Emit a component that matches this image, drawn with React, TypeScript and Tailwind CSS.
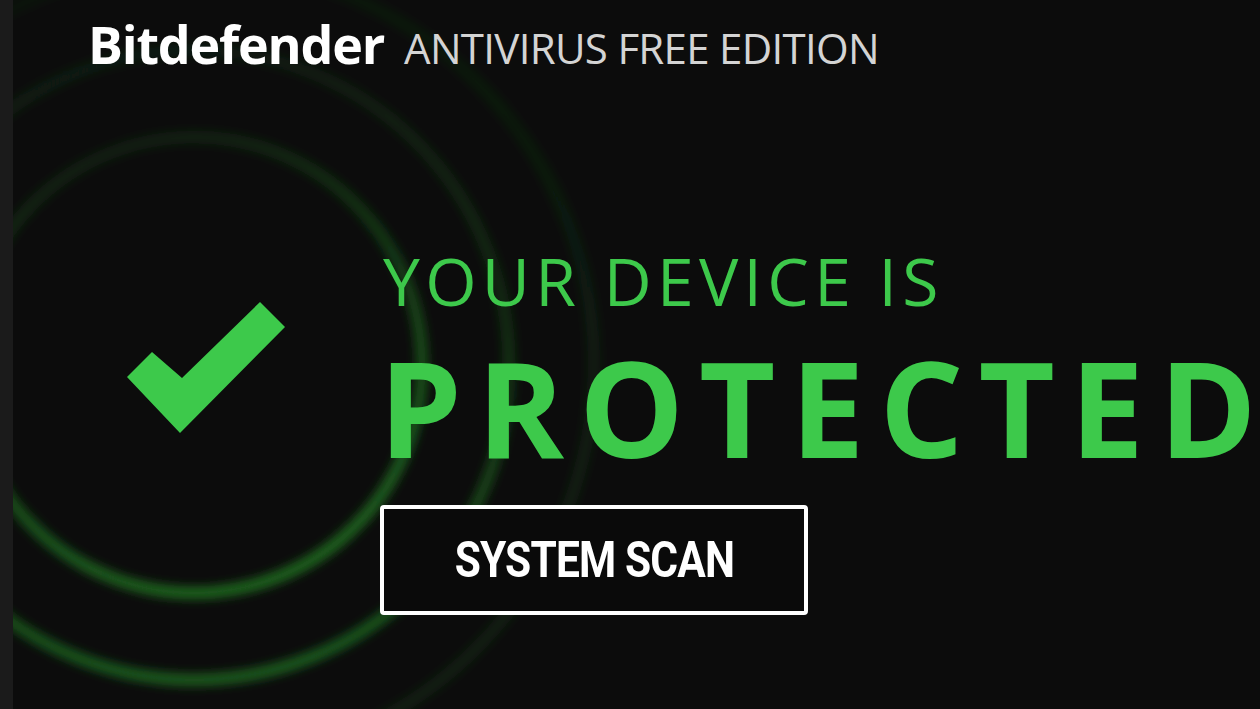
import React from "react";

function Rings() {
  return (
    <svg
      className="absolute left-0 top-0 pointer-events-none"
      width="1247"
      height="709"
      viewBox="0 0 1247 709"
    >
      <defs>
        <filter id="blur" x="-50%" y="-50%" width="200%" height="200%">
          <feGaussianBlur stdDeviation="5" />
        </filter>
        <linearGradient id="g1" x1="0.2" y1="0" x2="0.5" y2="1">
          <stop offset="0" stopColor="#1e6e20" stopOpacity="0.14" />
          <stop offset="0.45" stopColor="#1e6e20" stopOpacity="0.45" />
          <stop offset="1" stopColor="#1e6e20" stopOpacity="0.85" />
        </linearGradient>
        <linearGradient id="g2" x1="0.3" y1="0" x2="0.4" y2="1">
          <stop offset="0" stopColor="#1e6e20" stopOpacity="0.14" />
          <stop offset="0.5" stopColor="#1e6e20" stopOpacity="0.3" />
          <stop offset="1" stopColor="#1e6e20" stopOpacity="0.75" />
        </linearGradient>
        <linearGradient id="g3" x1="0" y1="0" x2="1" y2="1">
          <stop offset="0" stopColor="#1e6e20" stopOpacity="0.06" />
          <stop offset="1" stopColor="#1e6e20" stopOpacity="0.2" />
        </linearGradient>
      </defs>
      <g filter="url(#blur)" fill="none">
        <circle cx="181" cy="365" r="228" stroke="url(#g1)" strokeWidth="13" />
        <circle cx="181" cy="365" r="315" stroke="url(#g2)" strokeWidth="13" />
        <circle cx="181" cy="365" r="400" stroke="url(#g3)" strokeWidth="13" />
      </g>
    </svg>
  );
}

function Check() {
  return (
    <svg width="160" height="134" viewBox="0 0 160 134">
      <polygon
        points="1,76 26,51 56,77 134,1 159,26 54,132"
        fill="#3dc94b"
      />
    </svg>
  );
}

export default function App() {
  return (
    <div className="w-[1260px] h-[709px] flex bg-[#0c0c0c] overflow-hidden">
      <div className="w-[13px] h-full bg-[#1b1b1b] shrink-0" />
      <div className="relative flex-1 h-full bg-[#0c0c0c] overflow-hidden">
        <Rings />
        <div className="relative flex flex-col h-full">
          <div className="flex items-baseline pl-[75px] pt-[18px] h-[100px]">
            <span className="font-['Open_Sans',sans-serif] font-bold text-white text-[52px] leading-none tracking-[-1.2px]">
              Bitdefender
            </span>
            <span className="ml-[20px] font-['Open_Sans',sans-serif] text-[#d4d4d4] text-[42px] leading-none tracking-[-0.7px]">
              ANTIVIRUS FREE EDITION
            </span>
          </div>
          <div className="flex">
            <div className="w-[370px] shrink-0 pl-[113px] pt-[201px]">
              <Check />
            </div>
            <div className="flex flex-col pt-[147px]">
              <div className="font-['Open_Sans',sans-serif] font-normal text-[#3dc94b] text-[66px] leading-[66px] tracking-[5.3px] whitespace-nowrap">
                YOUR DEVICE I<span className="tracking-normal">S</span>
              </div>
              <div className="mt-[28px] -ml-[4px] font-['Open_Sans',sans-serif] font-bold text-[#3dc94b] text-[132px] leading-[132px] tracking-[15px] whitespace-nowrap">
                PROTECTE<span className="tracking-normal">D</span>
              </div>
              <button className="mt-[32px] -ml-[3px] w-[428px] h-[110px] border-[4px] border-white rounded-[4px] bg-[#0a0a0a] flex items-center justify-center">
                <span className="inline-block scale-x-[0.85] font-['Roboto',sans-serif] font-bold text-white text-[50px] leading-none tracking-[-1px]">
                  SYSTEM SCAN
                </span>
              </button>
            </div>
          </div>
        </div>
      </div>
    </div>
  );
}
